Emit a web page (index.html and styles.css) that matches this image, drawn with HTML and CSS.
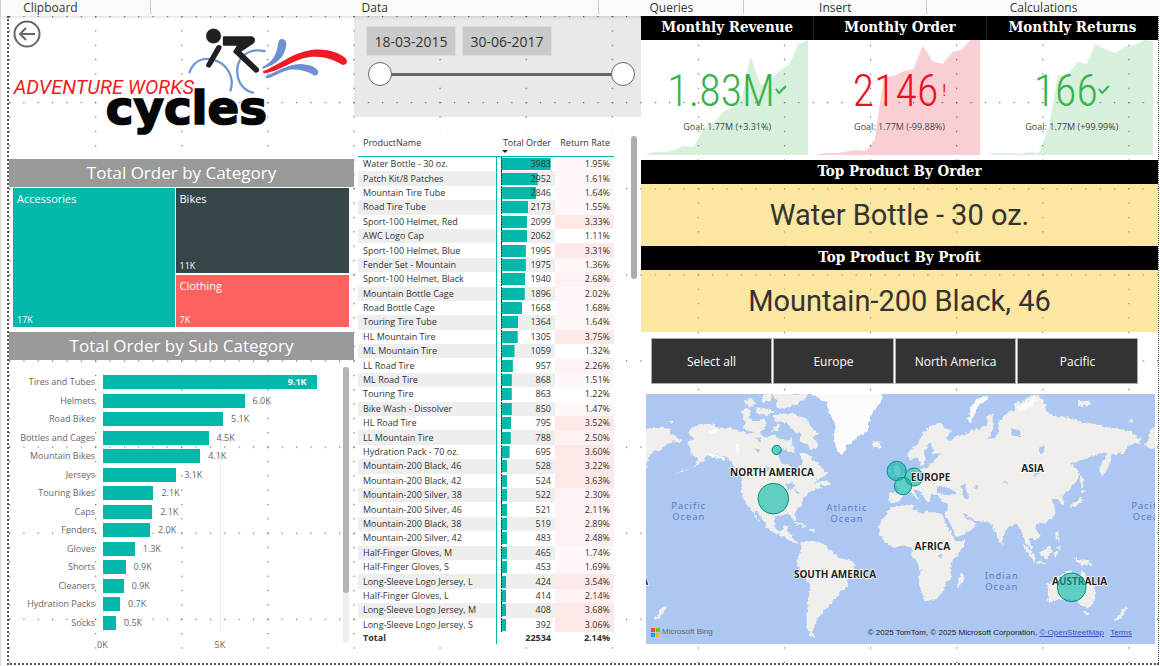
FILE: index.html
```html
<!DOCTYPE html>
<html lang="en">
<head>
<meta charset="utf-8">
<title>Adventure Works Cycles</title>
<link rel="stylesheet" href="styles.css">
</head>
<body>
<div class="page">
<header class="ribbon">
  <span class="group group-first">Clipboard</span><span class="group">Data</span><span class="group">Queries</span><span class="group">Insert</span><span class="group">Calculations</span>
</header>
<main class="canvas">
  <svg class="dots" aria-hidden="true">
    <defs>
      <pattern id="cols" width="86.1" height="14.35" patternUnits="userSpaceOnUse"><rect x="0" y="0" width="1.2" height="1.2"/></pattern>
      <pattern id="rows" width="14.35" height="86.1" patternUnits="userSpaceOnUse"><rect x="0" y="0" width="1.2" height="1.2"/></pattern>
    </defs>
    <rect width="100%" height="100%" fill="url(#cols)"/>
    <rect width="100%" height="100%" fill="url(#rows)"/>
  </svg>

  <section class="col left">
    <div class="brand">
      <button class="back" aria-label="Back"><svg viewBox="0 0 28 28"><circle cx="14" cy="14" r="12.5"/><path d="M22 14H7M13 8l-6 6 6 6"/></svg></button>
      <svg class="logo" viewBox="36 80 1010 325" role="img" aria-label="Adventure Works Cycles">
        <g fill="none" stroke="#6f97d8" stroke-width="7" stroke-linecap="round">
          <path d="M565 216C578 180 606 172 632 177C680 188 700 232 688 270"/>
          <path d="M790 152C740 142 706 172 708 216C710 250 730 270 755 277"/>
        </g>
        <g fill="#6f90d0">
          <path d="M783 200C812 186 826 166 831 128Q833 114 845 116Q857 120 855 134C850 172 826 192 784 205Z"/>
          <path d="M792 228C830 212 860 192 895 191C925 191 948 202 951 214Q951 226 939 225C918 212 890 206 865 208C836 214 820 230 795 234Z"/>
        </g>
        <path fill="#f01c24" d="M784 213C830 196 870 158 930 149C975 143 1022 158 1036 178Q1040 192 1024 194C996 176 960 165 925 170C875 177 835 214 788 219Z"/>
        <g fill="#231f20" stroke="#231f20" stroke-linejoin="round" stroke-linecap="round">
          <circle cx="637" cy="107" r="22"/>
          <path stroke-width="6" d="M668 111H752Q762 115 756 126L716 153L770 206Q772 214 763 214L699 154L712 133H668Z"/>
          <path stroke-width="16" fill="none" d="M653 142L623 194"/>
        </g>
        <text class="logo-top" x="38" y="282">ADVENTURE WORKS</text>
        <text class="logo-main" x="314" y="370">cycles</text>
      </svg>
    </div>

    <h2 class="bar-title">Total Order by Category</h2>
    <div class="treemap">
      <div class="tile acc"><span>Accessories</span><span class="val">17K</span></div>
      <div class="tile bikes"><span>Bikes</span><span class="val">11K</span></div>
      <div class="tile cloth"><span>Clothing</span><span class="val">7K</span></div>
    </div>

    <h2 class="bar-title">Total Order by Sub Category</h2>
    <div class="subcat">
      <div class="chart">
        <div class="names"><span>Tires and Tubes</span><span>Helmets</span><span>Road Bikes</span><span>Bottles and Cages</span><span>Mountain Bikes</span><span>Jerseys</span><span>Touring Bikes</span><span>Caps</span><span>Fenders</span><span>Gloves</span><span>Shorts</span><span>Cleaners</span><span>Hydration Packs</span><span>Socks</span></div>
        <div class="plot">
          <div class="brow"><i style="width:89%"><b>9.1K</b></i></div>
          <div class="brow"><i style="width:59%"></i>6.0K</div>
          <div class="brow"><i style="width:50%"></i>5.1K</div>
          <div class="brow"><i style="width:44%"></i>4.5K</div>
          <div class="brow"><i style="width:40.5%"></i>4.1K</div>
          <div class="brow"><i style="width:30.5%"></i>3.1K</div>
          <div class="brow"><i style="width:21%"></i>2.1K</div>
          <div class="brow"><i style="width:20.5%"></i>2.1K</div>
          <div class="brow"><i style="width:19.6%"></i>2.0K</div>
          <div class="brow"><i style="width:13.2%"></i>1.3K</div>
          <div class="brow"><i style="width:9.4%"></i>0.9K</div>
          <div class="brow"><i style="width:8.6%"></i>0.9K</div>
          <div class="brow"><i style="width:7.1%"></i>0.7K</div>
          <div class="brow"><i style="width:5.4%"></i>0.5K</div>
        </div>
        <div class="axis"><span>0K</span><span>5K</span></div>
      </div>
      <div class="track"><div class="thumb"></div></div>
    </div>
  </section>

  <section class="col mid">
    <div class="slicer">
      <div class="dates">
        <input type="text" aria-label="Start date" value="18-03-2015">
        <input type="text" aria-label="End date" value="30-06-2017">
      </div>
      <div class="slider">
        <input type="range" aria-label="Range start" min="0" max="100" value="0">
        <input type="range" aria-label="Range end" min="0" max="100" value="100">
      </div>
    </div>
    <div class="grid-wrap">
      <table>
        <thead><tr><th class="n">ProductName</th><th class="o">Total Order</th><th class="r">Return Rate</th></tr></thead>
        <tbody>
          <tr><td>Water Bottle - 30 oz.</td><td style="--w:92%">3983</td><td class="lo">1.95%</td></tr>
          <tr><td>Patch Kit/8 Patches</td><td style="--w:68%">2952</td><td class="lo">1.61%</td></tr>
          <tr><td>Mountain Tire Tube</td><td style="--w:65%">2846</td><td class="lo">1.64%</td></tr>
          <tr><td>Road Tire Tube</td><td style="--w:50%">2173</td><td class="lo">1.55%</td></tr>
          <tr><td>Sport-100 Helmet, Red</td><td style="--w:48%">2099</td><td class="hi">3.33%</td></tr>
          <tr><td>AWC Logo Cap</td><td style="--w:48%">2062</td><td>1.11%</td></tr>
          <tr><td>Sport-100 Helmet, Blue</td><td style="--w:46%">1995</td><td class="hi">3.31%</td></tr>
          <tr><td>Fender Set - Mountain</td><td style="--w:46%">1975</td><td class="lo">1.36%</td></tr>
          <tr><td>Sport-100 Helmet, Black</td><td style="--w:45%">1940</td><td class="md">2.68%</td></tr>
          <tr><td>Mountain Bottle Cage</td><td style="--w:44%">1896</td><td class="lo">2.02%</td></tr>
          <tr><td>Road Bottle Cage</td><td style="--w:39%">1668</td><td class="lo">1.68%</td></tr>
          <tr><td>Touring Tire Tube</td><td style="--w:32%">1364</td><td class="lo">1.64%</td></tr>
          <tr><td>HL Mountain Tire</td><td style="--w:31%">1305</td><td class="hi">3.75%</td></tr>
          <tr><td>ML Mountain Tire</td><td style="--w:25%">1059</td><td>1.32%</td></tr>
          <tr><td>LL Road Tire</td><td style="--w:22%">957</td><td class="md">2.26%</td></tr>
          <tr><td>ML Road Tire</td><td style="--w:20%">868</td><td class="lo">1.51%</td></tr>
          <tr><td>Touring Tire</td><td style="--w:20%">863</td><td>1.22%</td></tr>
          <tr><td>Bike Wash - Dissolver</td><td style="--w:20%">850</td><td class="lo">1.47%</td></tr>
          <tr><td>HL Road Tire</td><td style="--w:19%">795</td><td class="hi">3.52%</td></tr>
          <tr><td>LL Mountain Tire</td><td style="--w:18%">788</td><td class="md">2.50%</td></tr>
          <tr><td>Hydration Pack - 70 oz.</td><td style="--w:16%">695</td><td class="hi">3.60%</td></tr>
          <tr><td>Mountain-200 Black, 46</td><td style="--w:12%">528</td><td class="hi">3.22%</td></tr>
          <tr><td>Mountain-200 Black, 42</td><td style="--w:12%">524</td><td class="hi">3.63%</td></tr>
          <tr><td>Mountain-200 Silver, 38</td><td style="--w:12%">522</td><td class="md">2.30%</td></tr>
          <tr><td>Mountain-200 Silver, 46</td><td style="--w:12%">521</td><td class="md">2.11%</td></tr>
          <tr><td>Mountain-200 Black, 38</td><td style="--w:12%">519</td><td class="md">2.89%</td></tr>
          <tr><td>Mountain-200 Silver, 42</td><td style="--w:11%">483</td><td class="md">2.48%</td></tr>
          <tr><td>Half-Finger Gloves, M</td><td style="--w:11%">465</td><td class="lo">1.74%</td></tr>
          <tr><td>Half-Finger Gloves, S</td><td style="--w:11%">453</td><td class="lo">1.69%</td></tr>
          <tr><td>Long-Sleeve Logo Jersey, L</td><td style="--w:10%">424</td><td class="hi">3.54%</td></tr>
          <tr><td>Half-Finger Gloves, L</td><td style="--w:10%">414</td><td class="md">2.14%</td></tr>
          <tr><td>Long-Sleeve Logo Jersey, M</td><td style="--w:10%">408</td><td class="hi">3.68%</td></tr>
          <tr><td>Long-Sleeve Logo Jersey, S</td><td style="--w:10%">392</td><td class="hi">3.06%</td></tr>
        </tbody>
        <tfoot><tr><td>Total</td><td>22534</td><td>2.14%</td></tr></tfoot>
      </table>
      <div class="grid-thumb"></div>
    </div>
  </section>

  <section class="col right">
    <div class="kpis">
      <article class="kpi up">
        <h3>Monthly Revenue</h3>
        <div class="kpi-body">
          <svg class="trend" viewBox="0 0 163 115" preserveAspectRatio="none"><path d="M0 115L2 114 9 112 20 112 29 110 38 106 48 107 58 88 67 84 77 72 87 67 96 60 105 16 115 45 125 40 134 31 144 24 153 4 163 0V115Z"/></svg>
          <div class="num">1.83M<svg class="mark" viewBox="0 0 12 9"><path d="M1 4l3 4 7-7"/></svg></div>
          <p>Goal: 1.77M (+3.31%)</p>
        </div>
      </article>
      <article class="kpi down">
        <h3>Monthly Order</h3>
        <div class="kpi-body">
          <svg class="trend" viewBox="0 0 163 115" preserveAspectRatio="none"><path d="M0 115L1 114 10 113 20 113 37 110 48 111 57 99 66 37 76 36 86 31 96 29 105 6 115 21 125 24 135 12 144 10 153 0H163V115Z"/></svg>
          <div class="num">2146<span class="bang">!</span></div>
          <p>Goal: 1.77M (-99.88%)</p>
        </div>
      </article>
      <article class="kpi up">
        <h3>Monthly Returns</h3>
        <div class="kpi-body">
          <svg class="trend" viewBox="0 0 163 115" preserveAspectRatio="none"><path d="M0 115V113H19L29 114 39 112 48 113 58 88 67 36 77 34 87 22 96 24 105 4 114 9 125 13 134 7 144 5 154 0 163 1V115Z"/></svg>
          <div class="num">166<svg class="mark" viewBox="0 0 12 9"><path d="M1 4l3 4 7-7"/></svg></div>
          <p>Goal: 1.77M (+99.99%)</p>
        </div>
      </article>
    </div>
    <h3 class="top-title">Top Product By Order</h3>
    <div class="top-card">Water Bottle - 30 oz.</div>
    <h3 class="top-title">Top Product By Profit</h3>
    <div class="top-card">Mountain-200 Black, 46</div>
    <div class="regions"><button>Select all</button><button>Europe</button><button>North America</button><button>Pacific</button></div>
    <div class="map">
      <svg viewBox="18 18 1527 750" preserveAspectRatio="xMidYMid slice" role="img" aria-label="Orders by region">
        <defs>
          <filter id="coast" x="0" y="0" width="100%" height="100%"><feTurbulence type="fractalNoise" baseFrequency="0.08" numOctaves="3" seed="4"/><feDisplacementMap in="SourceGraphic" scale="16" xChannelSelector="R" yChannelSelector="G"/></filter>
        </defs>
        <rect x="0" y="0" width="1600" height="800" fill="#acc7f2"/>
        <g filter="url(#coast)" fill="#f0efeb">
          <path fill="none" d="M0 0H1600V800H0Z"/>
          <path d="M0 122L60 120 90 122 95 140 125 155 120 165 100 160 75 175 65 185 45 190 25 205 18 240 0 240Z"/>
          <path d="M140 165L160 152 143 130 165 118 180 108 215 108 240 120 270 120 300 128 330 138 350 130 380 150 400 142 420 152 440 160 455 148 458 172 432 188 416 205 422 225 440 230 455 237 468 258 478 242 488 222 480 196 495 192 510 205 520 217 535 225 545 240 562 252 553 265 535 275 520 285 540 282 545 300 520 305 505 315 490 335 485 350 470 365 465 375 470 398 462 400 452 382 430 378 410 385 403 400 405 420 415 430 428 427 432 415 449 413 440 432 457 440 460 455 478 465 470 470 450 460 435 444 405 435 378 417 372 400 355 378 342 364 350 385 359 402 348 392 335 364 318 347 307 327 305 290 308 275 298 262 288 250 285 235 270 215 250 205 225 198 200 208 175 228 155 240 180 217 165 205 150 197 152 180Z"/>
          <path d="M302 70L325 62 336 80 325 92 345 100 378 90 375 120 352 134 325 128 308 118 318 105Z"/>
          <path d="M310 42L335 32 350 48 330 56ZM345 62L385 60 405 72 390 82 350 78ZM365 22L395 18 392 40 370 42ZM398 18L505 18 490 35 470 48 430 62 405 55 412 38ZM400 85L430 76 470 78 500 95 512 118 535 135 520 150 535 175 512 186 500 172 478 160 482 138 455 125 440 105 405 100ZM398 115L420 110 415 130 400 128ZM440 172L465 178 460 195 445 188Z"/>
          <path fill="#fbfbfb" d="M505 10L560 45 572 80 585 110 580 150 590 180 600 198 612 195 622 170 650 150 682 130 688 100 700 70 718 45 735 10Z"/>
          <path fill="#fbfbfb" d="M200 132L225 120 240 128 215 140ZM285 165L296 168 300 195 288 190ZM180 192L220 198 255 210 250 215 210 204Z"/>
          <path d="M695 165L712 158 728 165 720 178 700 180ZM462 406L480 404 505 418 500 421 480 412ZM505 422L525 423 522 430 505 428ZM532 284L552 278 572 286 560 296ZM82 100L100 98 98 106ZM66 658L82 655 74 670 58 692 42 700 52 682ZM155 240L130 250 100 262 130 246Z"/>
          <path d="M484 468L500 457 520 460 545 462 560 480 580 490 590 505 610 512 640 520 646 530 635 550 625 570 620 600 600 610 590 630 570 650 555 665 545 680 530 690 525 710 515 730 526 750 508 742 500 715 500 670 508 620 510 590 490 565 475 535 470 515 480 495Z"/>
          <path d="M755 358L800 350 818 350 820 365 850 377 862 368 880 372 905 378 912 395 930 430 948 460 976 456 973 472 950 500 935 525 930 545 935 570 915 590 910 605 890 632 855 640 845 610 835 580 840 550 830 520 815 500 815 480 790 472 760 480 735 465 720 440 718 420 725 395 745 370Z"/>
          <g transform="translate(750 0)">
            <path d="M-3 315L-2 345 22 346 35 330 45 318 58 310 70 322 88 337 82 322 70 305 82 305 100 325 112 344 120 335 122 322 138 320 165 348 174 350 170 372 163 376 180 405 200 447 225 437 245 425 258 410 240 395 222 388 215 374 228 380 240 392 260 397 285 402 300 405 310 420 320 445 332 470 340 450 345 430 365 412 380 405 390 425 400 445 405 460 422 484 427 478 415 452 425 450 435 460 447 450 448 435 435 420 440 408 465 405 485 390 497 370 492 350 485 335 500 330 515 352 522 342 512 325 535 305 560 280 570 255 550 235 545 225 580 215 610 205 640 190 652 200 638 220 628 240 632 268 645 255 660 225 665 200 700 195 715 170 745 165 755 155 720 130 690 122 650 118 620 108 580 105 545 90 500 85 470 72 465 50 455 30 430 18 400 38 370 48 375 65 345 78 340 95 328 100 325 130 315 150 296 152 310 120 306 78 294 80 290 115 270 122 245 125 225 140 195 145 180 162 170 150 186 130 150 106 120 115 100 135 85 165 60 185 52 200 60 215 80 207 93 232 104 226 108 205 105 185 120 165 130 185 125 198 152 196 128 222 110 242 85 243 50 250 30 270 8 280 25 300 22 312Z"/>
            <path fill="#fbfbfb" d="M290 24L262 34 240 62 236 100 246 104 252 75 268 48 294 34ZM378 60L420 40 432 30 440 40 400 68Z"/>
            <path d="M10 262L20 225 30 245 34 265ZM-8 250L4 242 2 258ZM560 40L600 38 605 50 570 54ZM715 98L730 96 726 104Z"/>
            <path d="M572 262L578 268 582 300 572 300ZM572 305L588 308 575 318ZM572 322L578 335 562 352 538 358 545 348 562 340ZM482 388L488 382 486 398ZM496 432L505 430 502 450 510 465 498 452ZM500 478L514 470 512 486ZM400 468L410 474 438 508 434 520 418 505ZM436 520L468 526 466 530 438 526ZM450 492L480 474 486 490 472 512 454 506ZM488 492L504 490 496 510ZM548 508L565 514 590 516 612 538 595 530 570 530 560 520Z"/>
            <path d="M468 590L500 572 518 556 545 546 556 562 570 568 575 545 585 558 595 580 615 600 619 625 605 652 590 658 570 650 555 635 520 630 490 640 474 643 477 620ZM582 672L598 672 592 684ZM706 654L714 662 700 680 680 700 672 696 692 676ZM203 572L218 552 223 560 212 598 202 600ZM330 462L340 464 338 474Z"/>
            <path d="M800 112L775 130 782 142 770 160 772 180 800 184ZM760 166L772 168 766 176Z"/>
            <g fill="#acc7f2">
              <path d="M138 306L150 292 168 300 192 308 196 318 165 320 145 318ZM212 292L228 288 226 302 238 328 222 334 218 312ZM252 292L264 290 262 304ZM362 120L392 128 388 148 366 142ZM445 178L464 174 460 196 448 192ZM145 500L156 498 154 512 145 508ZM428 268L450 240 454 244 436 270ZM330 285L352 282 350 288Z"/>
            </g>
          </g>
          <path fill="#acc7f2" d="M432 290L455 284 466 296 452 300 450 312 444 300ZM458 302L474 308 480 322 466 314ZM338 185L360 182 356 192ZM345 150L368 148 362 162ZM378 222L386 240 380 252ZM408 190L432 184 428 205Z"/>
        </g>
        <g class="bubbles"><circle cx="400" cy="332" r="46"/><circle cx="410" cy="186" r="14"/><circle cx="770" cy="249" r="29"/><circle cx="822" cy="267" r="27"/><circle cx="789" cy="294" r="26"/></g>
        <g class="land-names">
          <text x="396" y="263">NORTH AMERICA</text><text x="585" y="571">SOUTH AMERICA</text><text x="872" y="279">EUROPE</text><text x="877" y="485">AFRICA</text><text x="1178" y="252">ASIA</text><text x="1319" y="592">AUSTRALIA</text><text x="14" y="592">A</text>
        </g>
        <g class="bubbles"><circle cx="1295" cy="598" r="43"/></g>
        <g class="sea-names">
          <text x="146" y="364">Pacific</text><text x="146" y="396">Ocean</text><text x="621" y="369">Atlantic</text><text x="621" y="401">Ocean</text><text x="1085" y="574">Indian</text><text x="1085" y="606">Ocean</text><text x="1526" y="364">Pacific</text><text x="1528" y="396">Ocean</text>
        </g>
      </svg>
      <div class="bing"><svg viewBox="0 0 9 9"><path fill="#f25022" d="M0 0h4v4H0z"/><path fill="#7fba00" d="M5 0h4v4H5z"/><path fill="#00a4ef" d="M0 5h4v4H0z"/><path fill="#ffb900" d="M5 5h4v4H5z"/></svg>Microsoft Bing</div>
      <div class="credit">© 2025 TomTom, © 2025 Microsoft Corporation, <a href="#osm">© OpenStreetMap</a> <a class="terms" href="#terms">Terms</a></div>
    </div>
  </section>
</main>
</div>
</body>
</html>
```
FILE: styles.css
```css
* { box-sizing: border-box; }
body { margin: 0; background: #fff; color: #333; font-family: "Open Sans", "Noto Sans", sans-serif; }
h2, h3, p { margin: 0; }
button, input { font-family: inherit; }
.page { min-height: 100vh; display: flex; flex-direction: column; border-left: 1px solid #ddd; }

.ribbon { display: grid; grid-template-columns: 150fr 449fr 145fr 183fr 233fr; height: 16px; background: #fafafa; box-shadow: 0 1px 3px rgba(0,0,0,.15); font-size: 12px; line-height: 15px; text-align: center; position: relative; z-index: 2; }
.group { height: 14px; border-right: 1px solid #ccc; }
.group:last-child { border-right: 0; }
.group-first { padding-right: 50px; }

.canvas { flex: 1; position: relative; margin: 0 1px 1px 6px; border: dotted #555; border-width: 0 1px 2px 2px; display: grid; grid-template-columns: 345fr 287fr 517fr; }
.dots { position: absolute; inset: 0; width: 100%; height: 100%; fill: #666; }
.col { position: relative; min-width: 0; display: flex; flex-direction: column; }

.brand { height: 143px; padding: 11px 4px 0; position: relative; }
.back { position: absolute; left: 4px; top: 4px; width: 28px; height: 28px; padding: 0; border: 0; background: none; }
.back svg { display: block; fill: none; stroke: #666; stroke-width: 2; }
.logo { display: block; width: 100%; }
.logo-top { font: italic 400 60px Roboto, sans-serif; fill: #f01c24; }
.logo-main { font: 700 140px "DejaVu Sans", sans-serif; fill: #050708; stroke: #050708; stroke-width: 5px; }

.bar-title { height: 28px; background: #999; color: #fff; font-size: 17px; font-weight: 400; line-height: 27px; text-align: center; }
.treemap { display: grid; grid-template: 85fr 52fr / 162fr 174fr; gap: 2px 1px; height: 139px; margin: 1px 5px 5px 4px; background: #fff; }
.tile { display: flex; flex-direction: column; justify-content: space-between; padding: 3px 4px 2px; color: #fff; font-size: 11px; line-height: 15px; }
.tile .val { font-size: 9px; line-height: 11px; }
.acc { grid-row: 1 / 3; background: #01b8aa; }
.bikes { background: #374649; }
.cloth { background: #fd625e; }

.subcat { flex: 1; display: flex; padding: 7px 5px 8px 4px; color: #666; font-size: 9px; }
.chart { flex: 1; display: grid; grid-template: 1fr 21px / 90px 1fr; padding-top: 6px; }
.names, .plot { display: grid; grid-auto-rows: 1fr; align-items: center; }
.names { text-align: right; padding-right: 8px; margin-bottom: 2px; line-height: 12px; white-space: nowrap; }
.plot { margin-bottom: 2px; background: linear-gradient(#eee, #eee) 49% 0 / 1px 100% no-repeat, linear-gradient(#eee, #eee) 0 0 / 1px 100% no-repeat; }
.brow { display: flex; align-items: center; gap: 8px; line-height: 14px; }
.brow i { height: 14px; background: #01b8aa; color: #fff; font-style: normal; text-align: right; padding-right: 10px; }
.axis { grid-column: 2; display: grid; grid-template-columns: 49% 51%; align-items: center; }
.axis span { margin-left: -6px; }
.track { width: 6px; margin: 0 0 12px; border-radius: 3px; background: #eee; }
.thumb { height: 82%; border-radius: 3px; background: #b3b3b3; }

.slicer { height: 101px; padding: 10px 6px 0 12px; background: rgba(0,0,0,.085); }
.dates { display: flex; gap: 6px; }
.dates input { width: 90px; height: 30px; padding: 0; border: 1px solid #ddd; background: #cacaca; color: #333; font-size: 14px; text-align: center; }
.slider { display: grid; margin: 6px 0 0 2px; }
.slider input { grid-area: 1 / 1; width: 100%; height: 24px; margin: 0; background: none; appearance: none; pointer-events: none; }
.slider input:first-child { background: linear-gradient(#666, #666) center / calc(100% - 20px) 3px no-repeat; }
.slider input::-webkit-slider-thumb { appearance: none; width: 24px; height: 24px; border: 1px solid #666; border-radius: 50%; background: #fff; pointer-events: auto; }

.grid-wrap { flex: 1; display: flex; justify-content: space-between; padding: 14px 4px 19px 4px; }
table { width: 256px; table-layout: fixed; border-collapse: separate; border-spacing: 0; font-size: 9px; line-height: 12px; background: #fff; }
th { height: 26px; padding: 0; font-weight: 400; vertical-align: top; padding-top: 6px; text-align: right; white-space: nowrap; border-bottom: 1px solid #01b8aa; }
th.n { width: 139px; text-align: left; padding-left: 5px; }
th.o { width: 58px; position: relative; padding-right: 4px; }
th.o::after { content: ""; position: absolute; left: 5px; bottom: 3px; border: 3px solid transparent; border-top-color: #222; border-bottom: 0; }
th.r { padding-right: 4px; }
td { padding: 0 4px 0 0; text-align: right; white-space: nowrap; }
td:first-child { text-align: left; padding-left: 5px; border-right: 1px solid #01b8aa; }
td:nth-child(2) { border-left: 4px solid #fff; background-clip: padding-box; }
tbody td:nth-child(2) { background-image: repeating-linear-gradient(#333 0 2px, transparent 2px 3px), linear-gradient(#01b8aa, #01b8aa); background-repeat: no-repeat; background-position: 0 0, 0 50%; background-size: 1px 100%, var(--w) 12px; }
tbody tr:nth-child(even) td:nth-child(-n+2) { background-color: #eee; }
.hi { background: #fee9e9; }
.md { background: #fef1f1; }
.lo { background: #fff7f7; }
tfoot td { font-weight: 700; }
.grid-thumb { width: 6px; height: 143px; margin-top: 5px; border-radius: 3px; background: #adadad; }

.kpis { display: grid; grid-template-columns: repeat(3, 1fr); }
.kpi h3, .top-title { height: 24px; background: #000; color: #fff; font: 700 15px/23px "DejaVu Serif Condensed", "DejaVu Serif", serif; text-align: center; white-space: nowrap; }
.kpi + .kpi h3 { border-left: 1px solid #222; }
.kpi-body { position: relative; height: 120px; text-align: center; padding-top: 24px; }
.trend { position: absolute; left: 5px; top: 0; width: calc(100% - 10px); height: 115px; }
.up { color: #37b34a; }
.down { color: #e81123; }
.trend path { fill: currentColor; opacity: .2; }
.num { position: relative; font: 300 44px/54px "Roboto Condensed", Roboto, sans-serif; }
.mark { width: 12px; height: 9px; fill: none; stroke: currentColor; stroke-width: 2; vertical-align: 12px; }
.bang { font-size: 16px; font-weight: 400; vertical-align: 10px; padding-left: 4px; }
.kpi p { position: relative; color: #444; font-size: 9px; line-height: 14px; margin-top: 2px; }
.top-card { height: 62px; background: rgba(246,202,44,.45); color: #333; font: 400 29px/62px Roboto, sans-serif; text-align: center; }
.regions { display: grid; grid-template-columns: repeat(4, 1fr); gap: 1px; padding: 6px 20px 10px 10px; }
.regions button { height: 46px; border: 1px solid #aaa; background: #333; color: #fff; font-size: 12px; padding: 0; }
.map { position: relative; flex: 1; margin: 0 3px 19px 5px; min-height: 240px; overflow: hidden; }
.map > svg { position: absolute; inset: 0; width: 100%; height: 100%; }
.land-names { font: 700 30px "Open Sans", sans-serif; fill: #222; text-anchor: middle; stroke: #fff; stroke-width: 4px; paint-order: stroke; }
.sea-names { font: 400 28px "Noto Sans", sans-serif; fill: #5b7cc4; text-anchor: middle; letter-spacing: 3px; }
.bubbles { fill: rgba(1,184,170,.6); stroke: #0b8e84; stroke-width: 3px; }
.bing { position: absolute; left: 5px; bottom: 6px; display: flex; align-items: center; gap: 2px; color: #666; font: 8px/12px "Liberation Sans", sans-serif; }
.bing svg { width: 9px; height: 9px; }
.credit { position: absolute; right: 23px; bottom: 5px; color: #222; font: 8px/12px "Liberation Sans", sans-serif; }
.credit a { color: #3355bb; }
.terms { margin-left: 4px; }
```
